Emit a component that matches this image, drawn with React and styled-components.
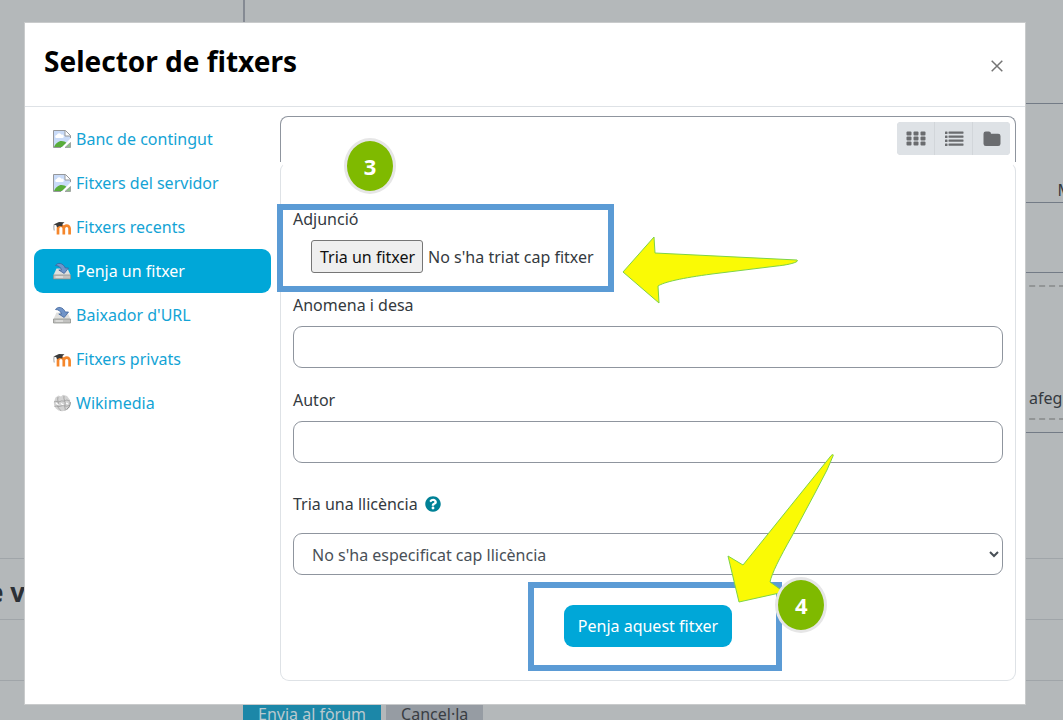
import React, { useState } from "react";
import styled, { createGlobalStyle } from "styled-components";
import { FaQuestionCircle } from "react-icons/fa";

const repositories = [
  { id: 1, name: "Banc de contingut", icon: "broken" },
  { id: 2, name: "Fitxers del servidor", icon: "broken" },
  { id: 3, name: "Fitxers recents", icon: "moodle" },
  { id: 4, name: "Penja un fitxer", icon: "drive" },
  { id: 5, name: "Baixador d'URL", icon: "drive" },
  { id: 6, name: "Fitxers privats", icon: "moodle" },
  { id: 7, name: "Wikimedia", icon: "wiki" },
];

function BrokenIcon() {
  return (
    <svg width="18" height="18" viewBox="0 0 18 18" aria-hidden="true">
      <path d="M.5 .5H12.500L17.500 5.500V8.500L8.500 17.500H.5Z" fill="#c9dbf8" />
      <path d="M3 8a1.600 1.600 0 0 1 .8-3 2.500 2.500 0 0 1 4.700-.3 1.700 1.700 0 0 1 1.200 3.300Z" fill="#fff" />
      <path d="M1 17C2.500 13.500 5.500 11 8.500 11c2.200 0 3.700 .8 4.800 1.800L8.800 17Z" fill="#58ad3a" />
      <path d="M12 .5V6H17.500Z" fill="#fff" />
      <path d="M8 17.500H.5V.5H12.500L17.500 5.500V8M12 .8V6H17.200" fill="none" stroke="#96989b" strokeWidth="1" />
      <path d="M12 17.500H17.500V12.500Z" fill="#8fbf85" stroke="#96989b" strokeWidth=".8" />
    </svg>
  );
}

function MoodleIcon() {
  return (
    <svg width="18" height="18" viewBox="0 0 18 18" aria-hidden="true">
      <path
        d="M5 16.500V10.500a2.900 2.900 0 0 1 5.800 0V16.500M10.800 10.500a2.900 2.900 0 0 1 5.800 0V16.500"
        fill="none"
        stroke="#f5862b"
        strokeWidth="2.700"
      />
      <path d="M.5 6.500L6 4 11.500 4.200 9.500 6 9.300 8.500C7.500 7.500 5.500 8 4 9.500L3.300 7.200Z" fill="#3b3b3b" />
      <path d="M1.200 6.500C.7 8.500 .8 10 1.200 12.500" fill="none" stroke="#777" strokeWidth=".7" />
    </svg>
  );
}

function DriveIcon() {
  return (
    <svg width="18" height="18" viewBox="0 0 18 18" aria-hidden="true">
      <path d="M3.500 6.500H14.500L17.500 13V16.500H.5V13Z" fill="#e0e0de" />
      <path d="M.5 13H17.500V17H.5Z" fill="#c2c2c0" stroke="#888985" strokeWidth=".7" />
      <path d="M2.500 15H10" stroke="#f2f2f0" strokeWidth="1" />
      <path
        d="M2.500 3.500C4.500 .3 9.800 .5 12.300 6H15.500L11.200 11.500 5.800 8H8.500C7.500 5 5.500 3.500 2.500 3.500Z"
        fill="#7094c8"
        stroke="#3d639c"
        strokeWidth=".8"
      />
    </svg>
  );
}

function WikiIcon() {
  return (
    <svg width="18" height="18" viewBox="0 0 18 18" aria-hidden="true">
      <path d="M2.500 3.500L5.500 1.500 8 2.500 10 .8 14 2 17 6 17.500 9.500A8.300 8.300 0 1 1 .8 8.500Z" fill="#d3d3d3" />
      <path
        d="M1 8C3.500 6 5 9 7 7.500S10.500 8 12.500 6.500 15.500 7.500 17 7M1.500 12.500C4 11 5 13.500 8 12S12 13.500 16.500 11.500M5 3C4 6.500 6 8.500 5 11S7 15 8 17M11 2C10 5 13 8 12 11S13 14 12 16.500"
        fill="none"
        stroke="#9b9b9b"
        strokeWidth=".8"
      />
      <path d="M3 9L5.500 11M8 9.500L10.500 11M13 9L15 10" stroke="#fff" strokeWidth="1.200" />
      <path d="M13.500 15.500A8 8 0 0 0 17.200 8" fill="none" stroke="#8a8a8a" strokeWidth="1" />
    </svg>
  );
}

const icons = {
  broken: BrokenIcon,
  moodle: MoodleIcon,
  drive: DriveIcon,
  wiki: WikiIcon,
};

function GridIcon() {
  return (
    <svg width="20" height="16" viewBox="0 0 20 16" aria-hidden="true">
      {[0, 7, 14].map((x) =>
        [0, 5, 10].map((y) => (
          <rect key={`${x}-${y}`} x={x + 0.5} y={y + 0.5} width="5" height="4" rx="1" fill="#6a6c6f" />
        ))
      )}
    </svg>
  );
}

function ListIcon() {
  return (
    <svg width="20" height="16" viewBox="0 0 20 16" aria-hidden="true">
      {[0, 4, 8, 12].map((y) => (
        <g key={y} fill="#6a6c6f">
          <rect x="1" y={y + 0.5} width="2.500" height="2.500" rx=".5" />
          <rect x="4.500" y={y + 0.5} width="15" height="2.200" rx=".4" />
        </g>
      ))}
    </svg>
  );
}

function FolderIcon() {
  return (
    <svg width="20" height="16" viewBox="0 0 20 16" aria-hidden="true">
      <path
        d="M1.500 2.800A2.300 2.300 0 0 1 3.800.5H6.700A2.300 2.300 0 0 1 9 2.800H16.200A2.300 2.300 0 0 1 18.500 5.100V12.700A2.300 2.300 0 0 1 16.200 15H3.800A2.300 2.300 0 0 1 1.500 12.700Z"
        fill="#6a6c6f"
      />
    </svg>
  );
}

function ForumPage() {
  return (
    <StPage>
      <StEditor />
      <StSizeLimit>Mida</StSizeLimit>
      <StManager>
        <StManagerBar />
        <StDropzone>afegir</StDropzone>
      </StManager>
      <StSection $first />
      <StSection>
        <StSectionTitle>e v</StSectionTitle>
      </StSection>
      <StSection />
      <StActions>
        <StAction $primary type="button">
          Envia al fòrum
        </StAction>
        <StAction type="button">Cancel·la</StAction>
      </StActions>
    </StPage>
  );
}

function App() {
  const [selected, setSelected] = useState(4);

  return (
    <StScreen>
      <GlobalStyle />
      <ForumPage />
      <StDialog role="dialog" aria-labelledby="picker-title">
        <StHeader>
          <StTitle id="picker-title">Selector de fitxers</StTitle>
          <StClose type="button" aria-label="Tanca">
            <svg width="12" height="12" viewBox="0 0 12 12" aria-hidden="true">
              <path d="M.7 .7L11.300 11.300M11.300 .7L.7 11.300" stroke="#747474" strokeWidth="1.500" />
            </svg>
          </StClose>
        </StHeader>
        <StBody>
          <StSidebar>
            {repositories.map((repo) => {
              const Icon = icons[repo.icon];
              return (
                <StRepo
                  key={repo.id}
                  href="#"
                  $active={repo.id === selected}
                  onClick={() => setSelected(repo.id)}
                >
                  <Icon />
                  {repo.name}
                </StRepo>
              );
            })}
          </StSidebar>
          <StPanel>
            <StToolbar>
              <StViewGroup>
                <StViewButton type="button" aria-label="Icones">
                  <GridIcon />
                </StViewButton>
                <StViewButton type="button" aria-label="Llista">
                  <ListIcon />
                </StViewButton>
                <StViewButton type="button" aria-label="Arbre">
                  <FolderIcon />
                </StViewButton>
              </StViewGroup>
            </StToolbar>
            <StForm onSubmit={(e) => e.preventDefault()}>
              <StAttachment>
                <StLabel htmlFor="file">Adjunció</StLabel>
                <StFileRow>
                  <StFileInput id="file" type="file" />
                  <StFileButton htmlFor="file">Tria un fitxer</StFileButton>
                  <span>No s'ha triat cap fitxer</span>
                </StFileRow>
                <StFileFrame />
                <StFileBadge>3</StFileBadge>
                <StFileArrow width="178" height="70" viewBox="0 0 178 70" aria-hidden="true">
                  <path d="M1 36L32 1 33 17 175 24C178 26 166 29 155 30L90 38C60 42 42 46 36 50L37 67Z" />
                </StFileArrow>
              </StAttachment>
              <StField>
                <StLabel htmlFor="saveas">Anomena i desa</StLabel>
                <StInput id="saveas" type="text" />
              </StField>
              <StField>
                <StLabel htmlFor="author">Autor</StLabel>
                <StInput id="author" type="text" />
              </StField>
              <StField $wide>
                <StLabelRow>
                  <StLabel htmlFor="license">Tria una llicència</StLabel>
                  <FaQuestionCircle size={16} color="#008196" />
                </StLabelRow>
                <StSelect id="license">
                  <option>No s'ha especificat cap llicència</option>
                </StSelect>
              </StField>
              <StSubmitArea>
                <StSubmit type="submit">Penja aquest fitxer</StSubmit>
                <StSubmitFrame />
                <StSubmitArrow width="110" height="152" viewBox="0 0 110 152" aria-hidden="true">
                  <path d="M107 3C108 1 106 1 104 4L17 112 2 103 13 149 58 139 44 129C46 120 53 106 66 83L89 40 101 17Z" />
                </StSubmitArrow>
                <StSubmitBadge>4</StSubmitBadge>
              </StSubmitArea>
            </StForm>
          </StPanel>
        </StBody>
      </StDialog>
    </StScreen>
  );
}

export default App;

const GlobalStyle = createGlobalStyle`
  * {
    box-sizing: border-box;
  }
  body {
    margin: 0;
    background: #b4b8ba;
    color: #343a40;
    font-family: "Noto Sans", "Open Sans", sans-serif;
    font-size: 16px;
    line-height: 24px;
  }
  button, input, select {
    font: inherit;
  }
`;

/* the forum page and the dialog share one grid cell */
const StScreen = styled.div`
  display: grid;
  grid-template: 100vh / 100%;
  overflow: hidden;
  & > * {
    grid-area: 1 / 1;
  }
`;

const StPage = styled.div`
  min-width: 0;
  overflow: hidden;
`;

const StEditor = styled.div`
  height: 104px;
  margin-left: 243px;
  border-left: 2px solid #858a93;
  border-bottom: 1px solid #737b86;
`;

const StSizeLimit = styled.div`
  display: flex;
  justify-content: flex-end;
  height: 98px;
  padding-top: 74px;
  margin-right: -32px;
`;

const StManager = styled.div`
  height: 231px;
  margin-left: 243px;
  border-top: 1px solid #737b86;
  border-bottom: 1px solid #737b86;
`;

const StManagerBar = styled.div`
  height: 70px;
  margin-bottom: 12px;
  border-bottom: 1px solid #737b86;
`;

const StDropzone = styled.div`
  display: flex;
  justify-content: flex-end;
  align-items: flex-end;
  height: 135px;
  padding-bottom: 8px;
  margin-right: -12px;
  border: 2px dashed #929596;
`;

const StSection = styled.div`
  height: ${(props) => (props.$first ? "126px" : "61px")};
  border-bottom: 1px solid #a0a5a9;
  padding-top: 17px;
`;

const StSectionTitle = styled.h3`
  margin: 0 0 0 -12px;
  color: #2b3036;
  font-size: 26px;
  line-height: 32px;
`;

const StActions = styled.div`
  display: flex;
  gap: 5px;
  padding: 12px 0 0 243px;
`;

const StAction = styled.button`
  height: 42px;
  padding: 0 15px;
  border: none;
  background-color: ${(props) => (props.$primary ? "#1c87a8" : "#969ca3")};
  color: ${(props) => (props.$primary ? "#b9c9cf" : "#3a3e43")};
`;

const StDialog = styled.section`
  align-self: start;
  z-index: 1;
  margin: 22px 37px 15px 24px;
  border: 1px solid #c9cbcc;
  background: #fff;
`;

const StHeader = styled.header`
  display: flex;
  align-items: center;
  justify-content: space-between;
  height: 84px;
  padding: 0 18px 8px 19px;
  border-bottom: 1px solid #dee2e6;
`;

const StTitle = styled.h1`
  margin: 0;
  color: #000;
  font-size: 28px;
  line-height: 36px;
`;

const StClose = styled.button`
  display: flex;
  align-self: flex-end;
  padding: 4px;
  margin-bottom: 22px;
  border: none;
  background: none;
  cursor: pointer;
`;

const StBody = styled.div`
  display: grid;
  grid-template-columns: 237px minmax(0, 1fr);
  gap: 9px;
  padding: 9px 9px 23px;
`;

const StSidebar = styled.nav`
  display: flex;
  flex-direction: column;
  padding-top: 1px;
`;

const StRepo = styled.a`
  display: flex;
  align-items: center;
  gap: 5px;
  height: 44px;
  padding-left: 19px;
  border-radius: 9px;
  background-color: ${(props) => (props.$active ? "#00a7d8" : "transparent")};
  color: ${(props) => (props.$active ? "#fff" : "#13a3d5")};
  text-decoration: none;
`;

const StPanel = styled.div`
  display: flex;
  flex-direction: column;
`;

const StToolbar = styled.div`
  display: flex;
  justify-content: flex-end;
  height: 46px;
  padding: 5px;
  border: 1px solid #8f959e;
  border-bottom: none;
  border-radius: 8px 8px 0 0;
`;

const StViewGroup = styled.div`
  display: flex;
  gap: 1px;
  height: 33px;
  border-radius: 4px;
  overflow: hidden;
  background: #d2d6da;
`;

const StViewButton = styled.button`
  display: flex;
  align-items: center;
  justify-content: center;
  width: 37px;
  padding: 0;
  border: none;
  background: #dee2e6;
  cursor: pointer;
`;

const StForm = styled.form`
  padding: 44px 12px 33px;
  border: 1px solid #dee2e6;
  border-top-color: transparent;
  border-radius: 9px;
`;

const StField = styled.div`
  display: flex;
  flex-direction: column;
  gap: ${(props) => (props.$wide ? "17px" : "9px")};
  margin-top: ${(props) => (props.$wide ? "29px" : "20px")};
`;

const StAttachment = styled(StField)`
  position: relative;
  margin-top: 0;
`;

const StLabel = styled.label`
  align-self: flex-start;
`;

const StLabelRow = styled.div`
  display: flex;
  align-items: center;
  gap: 7px;
`;

const StFileRow = styled.div`
  display: flex;
  align-items: center;
  gap: 5px;
  padding-left: 18px;
`;

const StFileInput = styled.input`
  position: absolute;
  width: 1px;
  height: 1px;
  opacity: 0;
`;

const StFileButton = styled.label`
  padding: 4px 7px 3px 8px;
  border: 1px solid #767676;
  border-radius: 3px;
  background-color: #efefef;
  color: #111;
  cursor: pointer;
`;

const StInput = styled.input`
  width: 100%;
  height: 42px;
  padding: 0 18px;
  border: 1px solid #8f959e;
  border-radius: 9px;
  background: #fff;
`;

const StSelect = styled.select`
  width: 100%;
  height: 42px;
  padding: 2px 2px 0 14px;
  border: 1px solid #8f959e;
  border-radius: 9px;
  background: #fff;
  color: #495057;
`;

const StSubmitArea = styled.div`
  position: relative;
  width: fit-content;
  margin: 30px auto 0;
`;

const StSubmit = styled.button`
  display: block;
  height: 42px;
  padding: 0 14px;
  border: none;
  border-radius: 9px;
  background-color: #00a7d8;
  color: #fff;
  cursor: pointer;
`;

/* tutorial marks drawn over the form */
const StFrame = styled.div`
  position: absolute;
  border: 6px solid #5b9bd5;
  pointer-events: none;
`;

const StFileFrame = styled(StFrame)`
  top: -3px;
  left: -16px;
  width: 337px;
  height: 88px;
`;

const StSubmitFrame = styled(StFrame)`
  inset: -23px -50px -24px -36px;
`;

const StBadge = styled.div`
  position: absolute;
  display: flex;
  align-items: center;
  justify-content: center;
  width: 52px;
  height: 56px;
  border: 3px solid #e6e6e6;
  border-radius: 50%;
  background-color: #7fba00;
  color: #fff;
  font-size: 22px;
  font-weight: bold;
`;

const StFileBadge = styled(StBadge)`
  top: -69px;
  left: 51px;
`;

const StSubmitBadge = styled(StBadge)`
  top: -28px;
  right: -95px;
`;

const StArrow = styled.svg`
  position: absolute;
  fill: #fafa05;
  stroke: #7ed348;
  stroke-width: 1;
  pointer-events: none;
`;

const StFileArrow = styled(StArrow)`
  top: 29px;
  left: 329px;
`;

const StSubmitArrow = styled(StArrow)`
  top: -152px;
  right: -104px;
`;
